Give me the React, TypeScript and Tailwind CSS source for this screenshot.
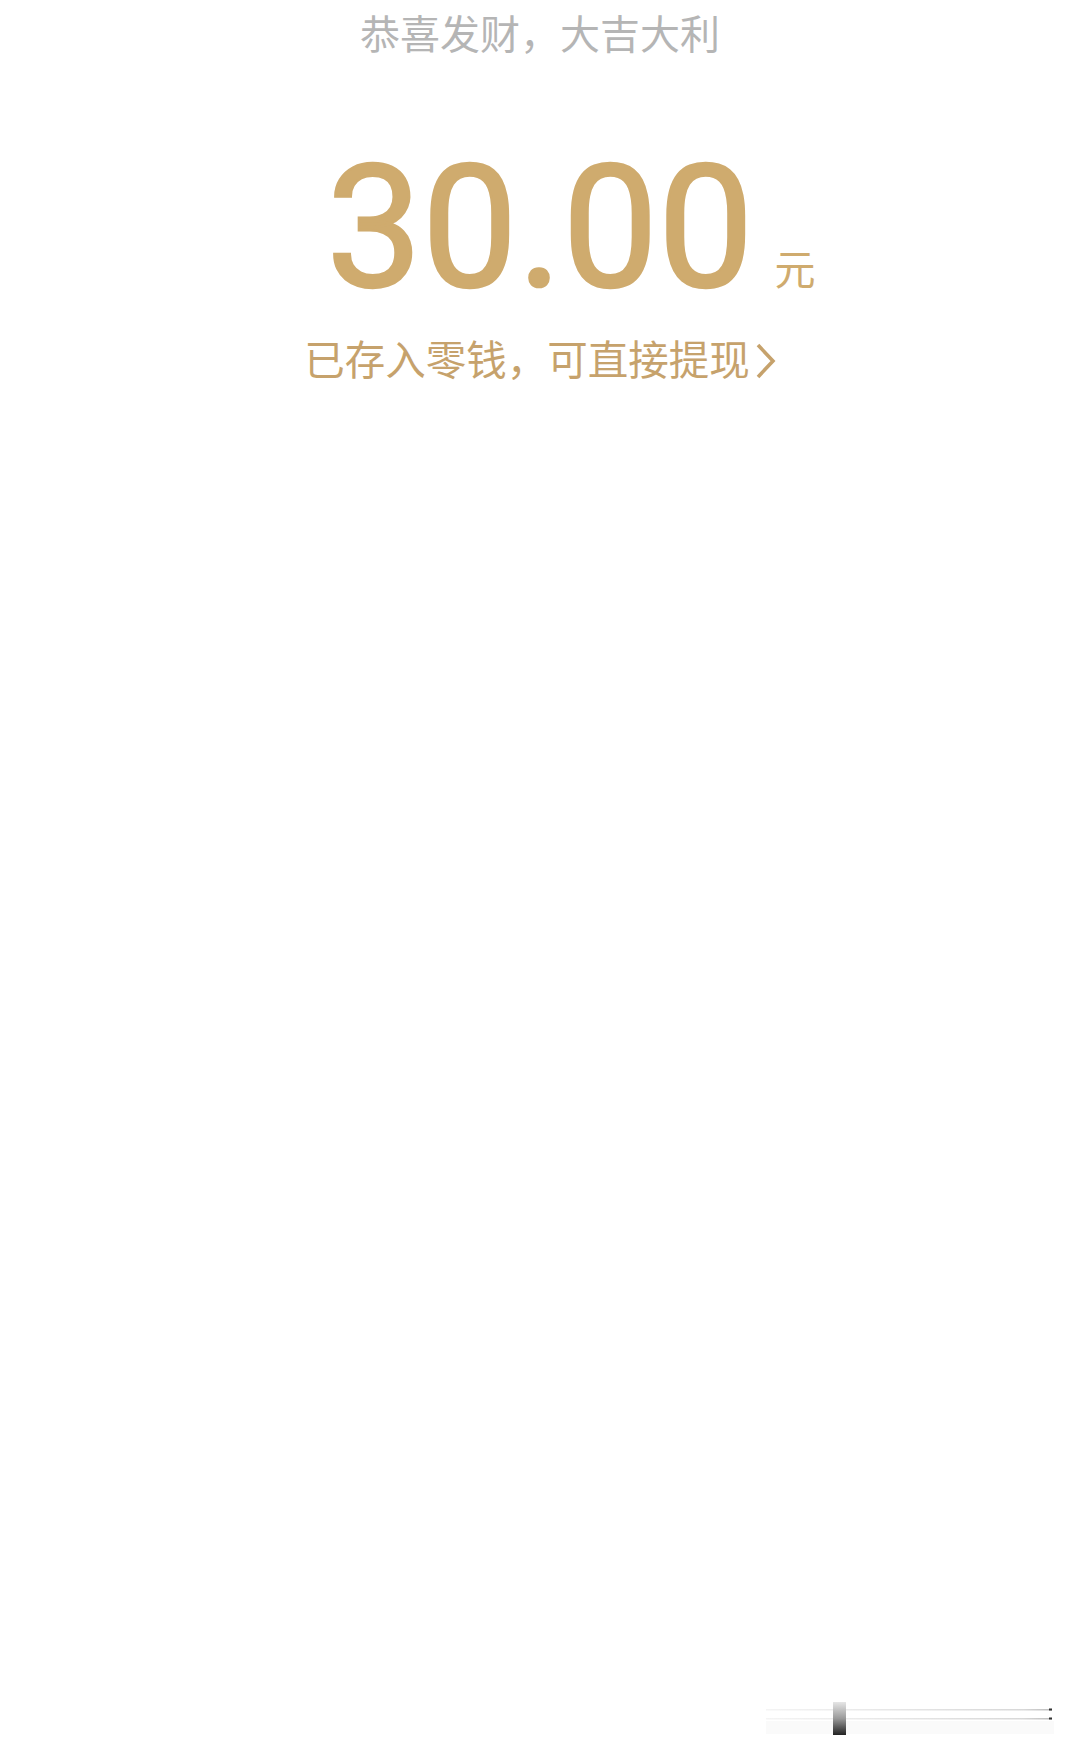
import React from 'react';

export default function App() {
  return (
    <div className="w-full h-[1758px] bg-white flex flex-col items-center font-['Liberation_Sans','Noto_Sans_CJK_SC',sans-serif]">
      {/* Greeting */}
      <div className="pt-[15px] text-[40px] leading-none text-[#b5b5b5]">
        恭喜发财，大吉大利
      </div>

      {/* Amount */}
      <div className="mt-[88px] flex justify-center">
        <div className="relative text-[170px] leading-none font-normal text-[#cfab6e] [-webkit-text-stroke:2.5px_#cfab6e] font-['Roboto',sans-serif]">
          30.00
          <span className="absolute left-full bottom-[25px] ml-[21px] text-[41px] leading-none font-normal [-webkit-text-stroke:0px] font-['Noto_Sans_CJK_SC',sans-serif]">
            元
          </span>
        </div>
      </div>

      {/* Change note */}
      <button className="mt-[28px] flex items-center text-[40.5px] leading-none text-[#c6a26c]">
        已存入零钱，可直接提现
        <svg width="20" height="36" viewBox="0 0 20 36" className="ml-[6px]">
          <polyline points="2,2 17,18 2,34" fill="none" stroke="#c6a26c" strokeWidth="3.6" strokeLinejoin="miter" />
        </svg>
      </button>

      {/* Bottom bar artifact */}
      <div className="mt-auto self-end mr-[24px] mb-[22px]">
        <svg width="290" height="34" viewBox="0 0 290 34">
          <defs>
            <linearGradient id="line" x1="0" x2="1" y1="0" y2="0">
              <stop offset="0" stopColor="#f4f4f4" />
              <stop offset="0.9" stopColor="#d8d8d8" />
              <stop offset="1" stopColor="#bdbdbd" />
            </linearGradient>
            <linearGradient id="knob" x1="0" x2="0" y1="0" y2="1">
              <stop offset="0" stopColor="#e6e6e6" />
              <stop offset="0.5" stopColor="#9a9a9a" />
              <stop offset="1" stopColor="#222222" />
            </linearGradient>
          </defs>
          <rect x="0" y="19" width="288" height="13" fill="#fafafa" />
          <rect x="0" y="7" width="286" height="1.5" fill="url(#line)" />
          <rect x="0" y="16" width="286" height="1.5" fill="url(#line)" />
          <rect x="283" y="6.5" width="3" height="2" fill="#333" />
          <rect x="283" y="15.5" width="3" height="2" fill="#333" />
          <rect x="67" y="0" width="13" height="33" fill="url(#knob)" />
        </svg>
      </div>
    </div>
  );
}
